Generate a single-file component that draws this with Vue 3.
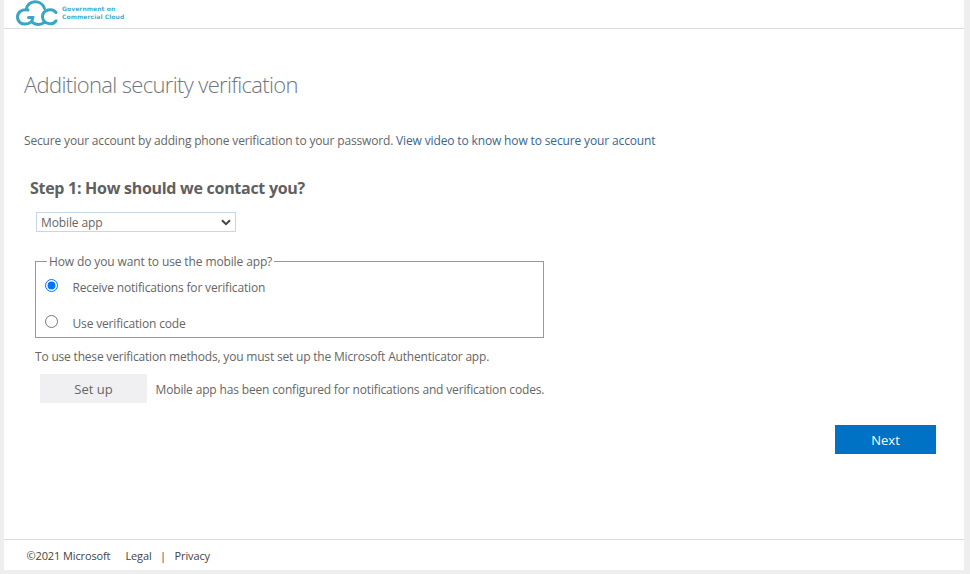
<script setup>
import { ref } from 'vue'

const contact = ref('app')
const usage = ref('notify')
</script>

<template>
  <div class="page">
    <header class="top">
      <svg class="mark" viewBox="0 0 46 28" width="46" height="28" role="img" aria-label="GCC">
        <g fill="none" stroke="#3aa6c6" stroke-width="3" stroke-linecap="round">
          <path d="M14 10C8 9 3.500 12 3.500 17C3.500 22 7.500 24.300 11.500 24C15.500 23.700 18.500 21.500 18.800 17.500H14.500" />
          <path d="M12.500 9.500C12.500 5 16.500 1.800 21 1.800C25.500 1.800 29.500 4.500 30.500 8.500" />
          <path d="M18.500 22.500C22 25 26 25 29.500 23" />
          <path d="M42 12.500C38.500 7.800 29 9 28.500 16.500C28.500 24 38.500 26 42 20.800" />
        </g>
      </svg>
      <div class="brand"><span>Government on</span><span>Commercial Cloud</span></div>
    </header>

    <main class="main">
      <h1>Additional security verification</h1>
      <p class="intro">Secure your account by adding phone verification to your password. <a>View video to know how to secure your account</a></p>
      <h2>Step 1: How should we contact you?</h2>
      <div class="picker">
        <select v-model="contact"><option value="app">Mobile app</option></select>
        <svg class="chev" viewBox="0 0 10 7" width="10" height="7"><path d="M1 1.200L5 5.200L9 1.200" fill="none" stroke="#444" stroke-width="2" /></svg>
      </div>
      <fieldset>
        <legend>How do you want to use the mobile app?</legend>
        <label><input v-model="usage" type="radio" value="notify"><span>Receive notifications for verification</span></label>
        <label><input v-model="usage" type="radio" value="code"><span>Use verification code</span></label>
      </fieldset>
      <p class="note">To use these verification methods, you must set up the Microsoft Authenticator app.</p>
      <div class="setup">
        <button class="set">Set up</button>
        <span class="state">Mobile app has been configured for notifications and verification codes.</span>
      </div>
      <button class="next">Next</button>
    </main>

    <footer>
      <span class="copy">©2021 Microsoft</span><a class="legal">Legal</a><i>|</i><a>Privacy</a>
    </footer>
  </div>
</template>

<style>
body { background: #eee; }
</style>

<style scoped>
.page { box-sizing: border-box; width: 960px; height: 570px; margin-left: 4px; background: #fff; display: flex; flex-direction: column; font: 12px/18px "Open Sans", sans-serif; letter-spacing: -0.165px; color: #666; white-space: nowrap; }
.top { box-sizing: border-box; height: 29px; padding-left: 10px; display: flex; align-items: flex-start; border-bottom: 1px solid #ddd; }
.mark { display: block; flex: none; }
.brand { display: flex; flex-direction: column; margin: 5px 0 0 2px; font: bold 6px/7.500px "DejaVu Sans", sans-serif; letter-spacing: 0.08px; color: #45b0c8; }
.main { flex: 1; display: flex; flex-direction: column; align-items: flex-start; padding: 39px 28px 0 20px; }
h1 { margin: 0; font-weight: 300; font-size: 22px; line-height: 32px; letter-spacing: -0.66px; color: #6f777d; }
p { margin: 0; }
.intro { margin-top: 32px; }
.intro a { color: #3a6590; letter-spacing: -0.14px; }
h2 { margin: 26px 0 0 6px; font-size: 16px; line-height: 24px; font-weight: 700; letter-spacing: -0.28px; color: #606060; }
.picker { display: grid; margin: 12px 0 0 12px; width: 200px; height: 20px; align-items: center; }
select { grid-area: 1 / 1; appearance: none; box-sizing: border-box; width: 200px; height: 20px; border: 1px solid #c5d7e5; border-radius: 0; background: #fff; padding: 1px 4px 0; font: inherit; letter-spacing: -0.12px; color: #666; }
.chev { grid-area: 1 / 1; justify-self: end; margin-right: 5px; pointer-events: none; }
fieldset { box-sizing: border-box; width: 509px; height: 86px; margin: 20px 0 0 11px; padding: 0 9px; border: 1px solid #999; }
legend { padding: 0 2px; margin-left: 2px; height: 18px; line-height: 20px; box-sizing: border-box; letter-spacing: -0.12px; }
label { display: flex; align-items: center; height: 18px; margin-top: 9px; }
label + label { margin-top: 18px; }
input { width: 13px; height: 13px; margin: -6px 14.500px 0 0; }
.note { margin: 10px 0 0 11px; letter-spacing: -0.19px; }
.setup { display: flex; align-items: center; margin: 8px 0 0 16px; gap: 8.500px; }
.state { padding-top: 2px; letter-spacing: -0.158px; }
button { border: 0; border-radius: 0; padding: 0; height: 29px; font: inherit; }
.set { width: 107px; background: #f0f0f2; color: #666; font-size: 13px; }
.next { align-self: flex-end; width: 101px; margin-top: 22px; background: #0072c6; color: #fff; font-size: 13px; }
footer { box-sizing: border-box; height: 31px; border-top: 1px solid #ddd; padding: 2px 0 0 22.500px; display: flex; align-items: center; font-size: 11px; letter-spacing: -0.12px; color: #444; }
footer i { font-style: normal; margin: 0 8.500px; }
.legal { margin-left: 15px; }
</style>
